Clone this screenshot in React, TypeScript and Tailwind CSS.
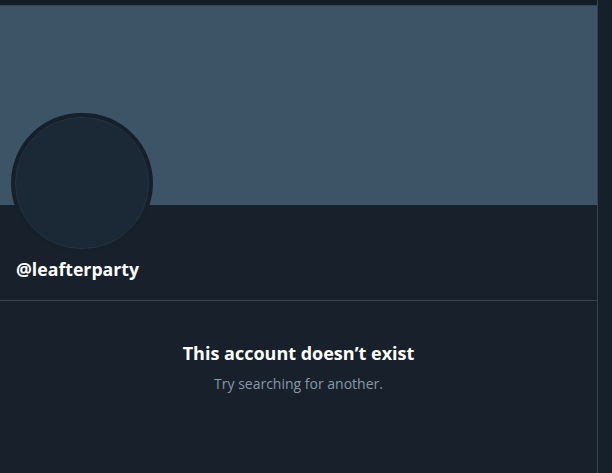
export default function App() {
  return (
    <div
      className="flex h-[473px] w-[612px] overflow-hidden bg-[#15202b]"
      style={{ fontFamily: '"Open Sans", "Noto Sans", sans-serif' }}
    >
      {/* Main column */}
      <main className="flex w-[598px] flex-col border-r border-[#38444d] bg-[#17202b]">
        <div className="h-[5px] bg-[#141c26]" />
        <div className="h-px bg-[#38444d]" />
        {/* Banner */}
        <div className="h-[199px] bg-[#3d5466]" />

        {/* Profile header */}
        <div className="relative h-[96px] border-b border-[#38444d]">
          <div className="absolute left-[11px] top-[-92px] h-[140px] w-[142px] rounded-full bg-[#15202b] p-1">
            <div className="h-full w-full rounded-full border border-[#253341] bg-[#1b2836]" />
          </div>
          <div className="absolute left-4 top-[54px] text-[17.7px] font-bold leading-5 text-white">
            @leafterparty
          </div>
        </div>

        {/* Empty state */}
        <div className="flex flex-col items-center pt-[40px]">
          <h2 className="text-[18px] font-bold leading-6 text-white">
            This account doesn’t exist
          </h2>
          <p className="mt-[9px] text-[14px] leading-5 text-[#8899a6]">
            Try searching for another.
          </p>
        </div>
      </main>

      {/* Right column */}
      <aside className="flex-1 bg-[#15202b]" />
    </div>
  );
}
